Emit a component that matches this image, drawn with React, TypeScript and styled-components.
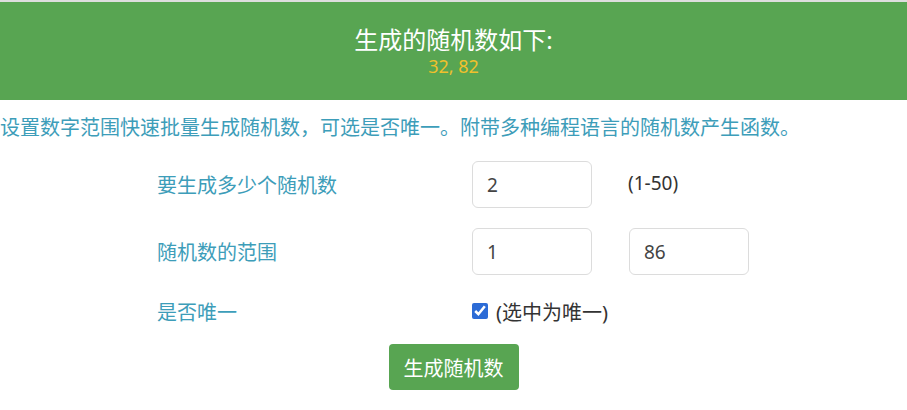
import styled, { createGlobalStyle } from "styled-components";

const GlobalStyle = createGlobalStyle`
	* {
		box-sizing: border-box;
	}

	body {
		margin: 0;
		background: #fff;
		font-family: "Noto Sans", "Noto Sans CJK SC", sans-serif;
		border-top: 2px solid #dedede;
	}
`;

const results = [32, 82];

const App = () => {
	return (
		<>
			<GlobalStyle />
			<Banner>
				<BannerTitle>生成的随机数如下:</BannerTitle>
				<BannerNumbers>{results.join(", ")}</BannerNumbers>
			</Banner>
			<Intro>设置数字范围快速批量生成随机数，可选是否唯一。附带多种编程语言的随机数产生函数。</Intro>
			<Form>
				<FormRow>
					<Label>要生成多少个随机数</Label>
					<Field defaultValue="2" />
					<Hint>(1-50)</Hint>
				</FormRow>
				<FormRow>
					<Label>随机数的范围</Label>
					<Field defaultValue="1" />
					<Field defaultValue="86" />
				</FormRow>
				<FormRow $compact>
					<Label>是否唯一</Label>
					<CheckLabel>
						<input type="checkbox" defaultChecked />
						(选中为唯一)
					</CheckLabel>
				</FormRow>
				<Actions>
					<SubmitButton type="button">生成随机数</SubmitButton>
				</Actions>
			</Form>
		</>
	);
};

const Banner = styled.div`
	background: #58a552;
	padding: 22px 0 23px;
	text-align: center;
`;

const BannerTitle = styled.div`
	color: #fff;
	font-size: 24px;
	line-height: 31px;
`;

const BannerNumbers = styled.div`
	color: #f0c02c;
	font-size: 18px;
	line-height: 22px;
`;

const Intro = styled.p`
	margin: 15px 0 20px;
	color: #3d9db9;
	font-size: 20px;
	line-height: 26px;
	white-space: nowrap;
`;

const Form = styled.div`
	display: flex;
	flex-direction: column;
	gap: 20px;
`;

const FormRow = styled.div<{ $compact?: boolean }>`
	display: grid;
	grid-template-columns: 315px 157px 120px;
	align-items: center;
	padding-left: 157px;
	height: ${({ $compact }) => ($compact ? "32px" : "47px")};
`;

const Label = styled.div`
	color: #3d9db9;
	font-size: 20px;
`;

const Field = styled.input`
	width: 120px;
	height: 47px;
	padding: 0 14px;
	border: 1px solid #dcdcdc;
	border-radius: 6px;
	font-family: inherit;
	font-size: 19px;
	color: #444;
	outline: none;
`;

const Hint = styled.div`
	font-size: 19px;
	color: #333;
	margin-left: -1px;
	margin-top: -4px;
`;

const CheckLabel = styled.label`
	grid-column: 2 / 4;
	display: flex;
	align-items: center;
	gap: 8px;
	font-size: 20px;
	color: #333;

	input {
		margin: 0;
		width: 16px;
		height: 16px;
		accent-color: #2c6bd6;
	}
`;

const Actions = styled.div`
	display: flex;
	justify-content: center;
	margin-top: -3px;
`;

const SubmitButton = styled.button`
	width: 130px;
	height: 46px;
	border: none;
	border-radius: 4px;
	background: #58a552;
	color: #fff;
	font-family: inherit;
	font-size: 20px;
	cursor: pointer;
`;

export default App;
